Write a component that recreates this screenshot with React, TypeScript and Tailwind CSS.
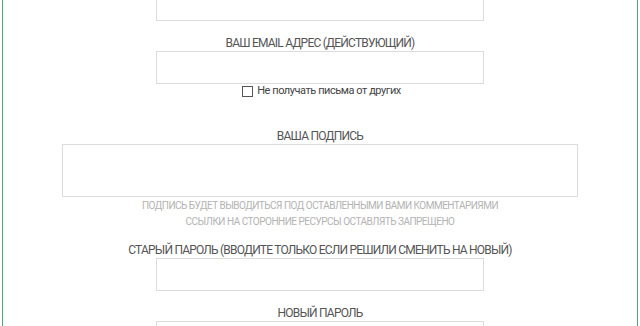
import React from "react";

const font = { fontFamily: "Roboto, 'Liberation Sans', sans-serif" };

function Label({ children }: { children: React.ReactNode }) {
  return (
    <div className="text-[12px] leading-[16px] text-[#555] text-center uppercase tracking-[-0.78px]">
      {children}
    </div>
  );
}

function Input() {
  return <div className="shrink-0 w-[328px] h-[33px] mx-auto border border-[#dcdcdc] bg-white" />;
}

export default function App() {
  return (
    <div className="w-[640px] h-[326px] overflow-hidden bg-white" style={font}>
      <div className="mx-[2px] min-h-[400px] border-x border-[#4fa574] flex flex-col items-center">
        <div className="-mt-[12px] shrink-0">
          <Input />
        </div>
        <div className="mt-[14px] shrink-0">
          <Label>Ваш email адрес (действующий)</Label>
        </div>
        <Input />
        <div className="shrink-0 flex items-center gap-[4px] h-[14px] ml-[3px] text-[11px] text-[#444] tracking-[-0.45px]">
          <span className="w-[11px] h-[11px] border border-[#555] bg-white" />
          <span>Не получать письма от других</span>
        </div>
        <div className="mt-[30px] shrink-0">
          <Label>Ваша подпись</Label>
        </div>
        <div className="shrink-0 w-[516px] h-[53px] border border-[#dcdcdc] bg-white" />
        <div className="shrink-0 text-[10px] leading-[15.5px] text-[#b3b3b3] text-center uppercase tracking-[-0.5px] mt-[1px]">
          <div>Подпись будет выводиться под оставленными вами комментариями</div>
          <div>Ссылки на сторонние ресурсы оставлять запрещено</div>
        </div>
        <div className="mt-[13px] shrink-0">
          <Label>Старый пароль (вводите только если решили сменить на новый)</Label>
        </div>
        <Input />
        <div className="mt-[14px] shrink-0">
          <Label>Новый пароль</Label>
        </div>
        <Input />
      </div>
    </div>
  );
}
